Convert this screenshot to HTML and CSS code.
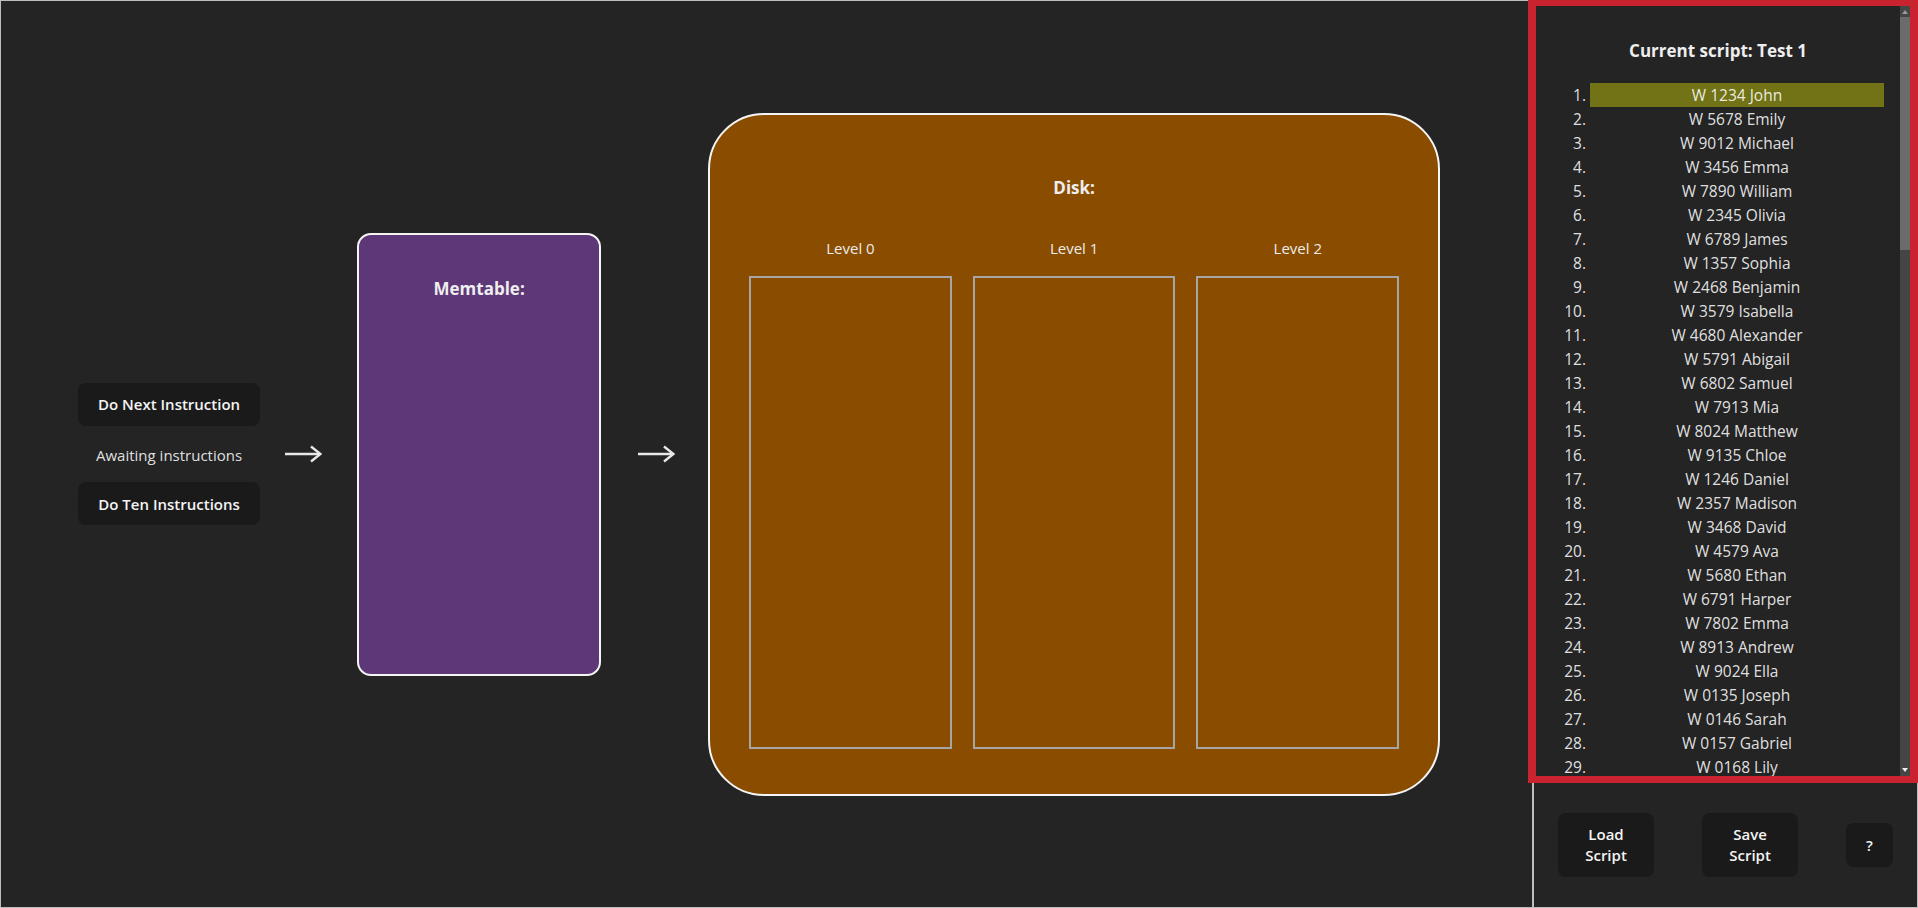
FILE: index.html
```html
<!DOCTYPE html>
<html lang="en">
<head>
  <meta charset="UTF-8">
  <meta name="viewport" content="width=device-width, initial-scale=1.0">
  <title>LSM Tree Visualiser</title>
  <link rel="stylesheet" href="styles.css">
</head>
<body>
  <div class="app">
    <!-- tree view -->
    <div class="main">
      <div class="controls">
        <button class="btn">Do Next Instruction</button>
        <p class="status">Awaiting instructions</p>
        <button class="btn">Do Ten Instructions</button>
      </div>

      <svg class="arrow first" width="38" height="18" viewBox="0 0 38 18">
        <path d="M1 9 H36" />
        <path d="M27 1.5 L36.5 9 L27 16.5" />
      </svg>

      <div class="memtable">
        <h3 class="title">Memtable:</h3>
      </div>

      <svg class="arrow second" width="38" height="18" viewBox="0 0 38 18">
        <path d="M1 9 H36" />
        <path d="M27 1.5 L36.5 9 L27 16.5" />
      </svg>

      <div class="disk">
        <h3 class="title">Disk:</h3>
        <div class="levels">
          <div class="level">
            <p class="level_name">Level 0</p>
            <div class="level_box"></div>
          </div>
          <div class="level">
            <p class="level_name">Level 1</p>
            <div class="level_box"></div>
          </div>
          <div class="level">
            <p class="level_name">Level 2</p>
            <div class="level_box"></div>
          </div>
        </div>
      </div>
    </div>

    <!-- script panel -->
    <div class="side">
      <div class="script_box">
        <div class="script_scroll">
          <h3 class="script_title">Current script: Test 1</h3>
          <ol class="script_list">
            <li class="current">W 1234 John</li>
            <li>W 5678 Emily</li>
            <li>W 9012 Michael</li>
            <li>W 3456 Emma</li>
            <li>W 7890 William</li>
            <li>W 2345 Olivia</li>
            <li>W 6789 James</li>
            <li>W 1357 Sophia</li>
            <li>W 2468 Benjamin</li>
            <li>W 3579 Isabella</li>
            <li>W 4680 Alexander</li>
            <li>W 5791 Abigail</li>
            <li>W 6802 Samuel</li>
            <li>W 7913 Mia</li>
            <li>W 8024 Matthew</li>
            <li>W 9135 Chloe</li>
            <li>W 1246 Daniel</li>
            <li>W 2357 Madison</li>
            <li>W 3468 David</li>
            <li>W 4579 Ava</li>
            <li>W 5680 Ethan</li>
            <li>W 6791 Harper</li>
            <li>W 7802 Emma</li>
            <li>W 8913 Andrew</li>
            <li>W 9024 Ella</li>
            <li>W 0135 Joseph</li>
            <li>W 0146 Sarah</li>
            <li>W 0157 Gabriel</li>
            <li>W 0168 Lily</li>
          </ol>
        </div>
        <!-- scrollbar -->
        <div class="scrollbar">
          <span class="sb_arrow up"></span>
          <div class="sb_thumb"></div>
          <span class="sb_arrow down"></span>
        </div>
      </div>

      <div class="script_buttons">
        <button class="btn wide">Load Script</button>
        <button class="btn wide">Save Script</button>
        <button class="btn">?</button>
      </div>
    </div>
  </div>
</body>
</html>
```

FILE: styles.css
```css
* {
  box-sizing: border-box;
  margin: 0;
}

body {
  background: #242424;
  color: rgba(255, 255, 255, 0.87);
  font-family: "Open Sans", "Noto Sans", sans-serif;
  font-size: 15px;
  line-height: 24px;
}

.app {
  display: flex;
  height: 100vh;
  border: 1px solid #bdbdbd;
}

/* left part: controls + memtable + disk */
.main {
  flex: 1;
  display: flex;
  align-items: center;
  padding-left: 77px;
}

.controls {
  display: flex;
  flex-direction: column;
  align-items: center;
}

.status {
  margin: 17px 0 15px;
}

.btn {
  background: #1a1a1a;
  color: #f4f4f4;
  border: 1px solid transparent;
  border-radius: 8px;
  padding: 8.6px 19px;
  font-family: inherit;
  font-size: 15px;
  font-weight: 600;
  line-height: 24px;
  cursor: pointer;
}

.btn:hover {
  border-color: #646cff;
}

.arrow {
  fill: none;
  stroke: #e8e8e8;
  stroke-width: 2.4;
}

.arrow.first {
  margin: 0 35px 0 24px;
}

.arrow.second {
  margin: 0 33px 0 36px;
}

.title {
  text-align: center;
  font-size: 17px;
  line-height: 24px;
  font-weight: 700;
  color: #eeeeee;
}

.memtable {
  width: 244px;
  height: 443px;
  background: #5e3778;
  border: 2px solid #f5f5f5;
  border-radius: 14px;
  padding-top: 42px;
}

.disk {
  width: 732px;
  height: 683px;
  background: #8a4d00;
  border: 2px solid #f5f5f5;
  border-radius: 56px;
  padding: 61px 39px 0 39px;
}

.levels {
  display: grid;
  grid-template-columns: repeat(3, 1fr);
  gap: 21px;
  margin-top: 36px;
}

.level_name {
  text-align: center;
  margin-bottom: 16px;
  color: #ececec;
}

.level_box {
  height: 473px;
  border: 2px solid #a6a6a6;
}

/* right part: script */
.side {
  width: 385px;
  border-left: 2px solid #bdbdbd;
  display: flex;
  flex-direction: column;
}

.script_box {
  display: flex;
  height: 783px;
  margin: -1px -1px 0 -6px;
  border: 8px solid #c8232e;
  border-top-width: 6px;
  border-bottom-width: 7px;
}

.script_scroll {
  flex: 1;
  overflow: hidden;
  padding-top: 33px;
}

.scrollbar {
  width: 10px;
  background: #454545;
  display: flex;
  flex-direction: column;
  align-items: center;
}

.sb_thumb {
  align-self: stretch;
  height: 233px;
  background: #6b6b6b;
}

.sb_arrow {
  width: 0;
  height: 0;
  border-left: 3.5px solid transparent;
  border-right: 3.5px solid transparent;
}

.sb_arrow.up {
  margin: 4px 0 3px;
  border-bottom: 4px solid #9a9a9a;
}

.sb_arrow.down {
  margin: auto 0 4px;
  border-top: 4px solid #f0f0f0;
}

.script_title {
  text-align: center;
  font-size: 17px;
  font-weight: 700;
  color: #eeeeee;
}

.script_list {
  margin: 20px 16px 20px 14px;
  padding-left: 40px;
  font-size: 15.5px;
}

.script_list li {
  text-align: center;
  height: 24px;
}

.script_list li.current {
  background: #717316;
}

.script_buttons {
  flex: 1;
  display: flex;
  align-items: center;
  justify-content: space-around;
}

.btn.wide {
  width: 96px;
  padding: 10px 19px;
  line-height: 21px;
}
```
